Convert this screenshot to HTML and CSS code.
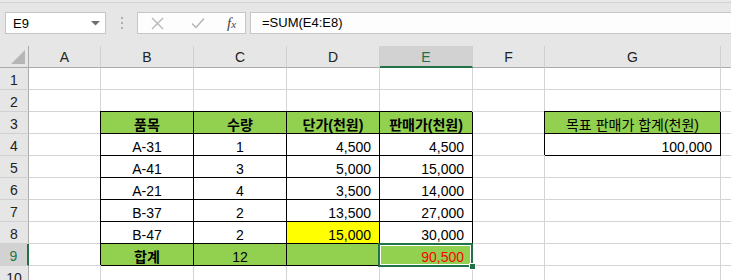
FILE: index.html
```html
<!DOCTYPE html>
<html lang="ko">
<head>
    <meta charset="UTF-8">
    <title>Sheet1</title>
    <link rel="stylesheet" href="styles.css">
</head>
<body>
<div class="toolbar">
    <div class="namebox">
        <span>E9</span>
        <svg class="drop" width="9" height="5" viewBox="0 0 9 5"><path d="M0 0H9L4.5 4.5Z" fill="#6f6f6f"/></svg>
    </div>
    <div class="grip"><i></i><i></i><i></i></div>
    <div class="fbtns">
        <svg width="13" height="13" viewBox="0 0 13 13"><path d="M1 1L12 12M12 1L1 12" stroke="#b4b4b4" stroke-width="1.3" fill="none"/></svg>
        <svg width="14" height="12" viewBox="0 0 14 12"><path d="M1 6.5L5 10.5L13 1.5" stroke="#b4b4b4" stroke-width="1.5" fill="none"/></svg>
        <span class="fx">f<i>x</i></span>
    </div>
    <div class="formula">=SUM(E4:E8)</div>
</div>

<div class="sheet">
    <div class="corner"><svg width="14" height="14" viewBox="0 0 14 14"><path d="M14 0V14H0Z" fill="#b6b6b6"/></svg></div>
    <div class="ch">A</div>
    <div class="ch">B</div>
    <div class="ch">C</div>
    <div class="ch">D</div>
    <div class="ch sel">E</div>
    <div class="ch">F</div>
    <div class="ch">G</div>
    <div class="ch"></div>

    <div class="rh">1</div>
    <div class="c"></div><div class="c"></div><div class="c"></div><div class="c"></div><div class="c"></div><div class="c"></div><div class="c"></div><div class="c"></div>

    <div class="rh">2</div>
    <div class="c"></div><div class="c"></div><div class="c"></div><div class="c"></div><div class="c"></div><div class="c"></div><div class="c"></div><div class="c"></div>

    <div class="rh">3</div>
    <div class="c"></div>
    <div class="c bx green bold ctr">품목</div>
    <div class="c bx green bold ctr">수량</div>
    <div class="c bx green bold ctr">단가(천원)</div>
    <div class="c bx green bold ctr">판매가(천원)</div>
    <div class="c"></div>
    <div class="c bx green ctr">목표 판매가 합계(천원)</div>
    <div class="c"></div>

    <div class="rh">4</div>
    <div class="c"></div>
    <div class="c bx ctr">A-31</div>
    <div class="c bx ctr">1</div>
    <div class="c bx num">4,500</div>
    <div class="c bx num">4,500</div>
    <div class="c"></div>
    <div class="c bx num">100,000</div>
    <div class="c"></div>

    <div class="rh">5</div>
    <div class="c"></div>
    <div class="c bx ctr">A-41</div>
    <div class="c bx ctr">3</div>
    <div class="c bx num">5,000</div>
    <div class="c bx num">15,000</div>
    <div class="c"></div><div class="c"></div><div class="c"></div>

    <div class="rh">6</div>
    <div class="c"></div>
    <div class="c bx ctr">A-21</div>
    <div class="c bx ctr">4</div>
    <div class="c bx num">3,500</div>
    <div class="c bx num">14,000</div>
    <div class="c"></div><div class="c"></div><div class="c"></div>

    <div class="rh">7</div>
    <div class="c"></div>
    <div class="c bx ctr">B-37</div>
    <div class="c bx ctr">2</div>
    <div class="c bx num">13,500</div>
    <div class="c bx num">27,000</div>
    <div class="c"></div><div class="c"></div><div class="c"></div>

    <div class="rh">8</div>
    <div class="c"></div>
    <div class="c bx ctr">B-47</div>
    <div class="c bx ctr">2</div>
    <div class="c bx num yellow">15,000</div>
    <div class="c bx num">30,000</div>
    <div class="c"></div><div class="c"></div><div class="c"></div>

    <div class="rh sel">9</div>
    <div class="c"></div>
    <div class="c bx green bold ctr">합계</div>
    <div class="c bx green ctr">12</div>
    <div class="c bx green"></div>
    <div class="c bx green num red active">90,500<span class="cursor"><b class="handle"></b></span></div>
    <div class="c"></div><div class="c"></div><div class="c"></div>

    <div class="rh">10</div>
    <div class="c"></div><div class="c"></div><div class="c"></div><div class="c"></div><div class="c"></div><div class="c"></div><div class="c"></div><div class="c"></div>
</div>
</body>
</html>
```

FILE: styles.css
```css
* {
    box-sizing: border-box;
}
html, body {
    margin: 0;
    height: 280px;
    overflow: hidden;
    background: #fff;
    font-family: "Liberation Sans", "Noto Sans CJK KR", sans-serif;
}

/* formula bar */
.toolbar {
    display: flex;
    align-items: center;
    height: 46px;
    padding: 0 0 0 5px;
    background: linear-gradient(#e9e9e9 2px, #d2d2d2 2px, #d2d2d2 3px, #e6e6e6 3px);
    font-size: 13px;
    color: #000;
}
.namebox {
    display: flex;
    align-items: center;
    justify-content: space-between;
    width: 101px;
    height: 22px;
    padding: 0 5px 0 7px;
    background: #fff;
    border: 1px solid #c6c6c6;
}
.drop {
    margin-top: 1px;
}
.grip {
    display: flex;
    flex-direction: column;
    gap: 3px;
    width: 2px;
    margin: 0 14px 0 15px;
}
.grip i {
    display: block;
    width: 2px;
    height: 2px;
    background: #b0b0b0;
}
.fbtns {
    display: flex;
    align-items: center;
    width: 109px;
    height: 22px;
    padding: 0 0 0 13px;
    background: #fdfdfd;
    border: 1px solid #c6c6c6;
}
.fbtns svg:nth-child(2) {
    margin-left: 27px;
}
.fx {
    margin-left: 22px;
    font-family: "Liberation Serif", serif;
    font-style: italic;
    font-size: 15px;
    color: #444;
}
.fx i {
    font-size: 11px;
}
.formula {
    flex: 1;
    height: 22px;
    margin-left: 4px;
    padding: 2px 0 0 11px;
    background: #fdfdfd;
    border: 1px solid #c6c6c6;
    border-right: none;
}

/* sheet grid */
.sheet {
    display: grid;
    grid-template-columns: 29px 72px 93px 93px 93px 93px 72px 176px 1fr;
    grid-auto-rows: 22px;
    font-size: 14px;
}
.corner, .ch, .rh {
    display: flex;
    align-items: center;
    justify-content: center;
    background: #e6e6e6;
    color: #222;
    line-height: 16px;
    border-right: 1px solid #d0d0d0;
    border-bottom: 1px solid #d0d0d0;
}
.corner {
    justify-content: flex-end;
    align-items: flex-end;
    padding: 0 3px 3px 0;
    border-right-color: #ababab;
    border-bottom-color: #ababab;
}
.ch {
    border-bottom-color: #ababab;
    padding-top: 1px;
}
.rh {
    border-right-color: #ababab;
    padding-top: 2px;
}
.ch.sel {
    background: #d2d2d2;
    color: #217346;
    border-bottom: 2px solid #217346;
}
.rh.sel {
    background: #d2d2d2;
    color: #217346;
    border-right: 2px solid #217346;
}

.c {
    display: flex;
    align-items: flex-end;
    padding: 0 8px;
    line-height: 16px;
    white-space: nowrap;
    color: #000;
    border-right: 1px solid #d4d4d4;
    border-bottom: 1px solid #d4d4d4;
}
.bx {
    border-right-color: #000;
    border-bottom-color: #000;
    box-shadow: -1px -1px 0 #000;
}
.ctr {
    justify-content: center;
}
.num {
    justify-content: flex-end;
}
.green {
    background: #92d050;
}
.yellow {
    background: #ffff00;
}
.bold {
    font-weight: bold;
}
.red {
    color: #ff0000;
}

/* active cell */
.active {
    position: relative;
}
.cursor {
    position: absolute;
    left: -2px;
    top: -1px;
    right: -1px;
    bottom: -2px;
    border: 2px solid #217346;
    box-shadow: inset 0 0 0 1px #fff;
}
.handle {
    position: absolute;
    right: -5px;
    bottom: -5px;
    width: 7px;
    height: 7px;
    background: #217346;
    border: 1px solid #fff;
}
```
